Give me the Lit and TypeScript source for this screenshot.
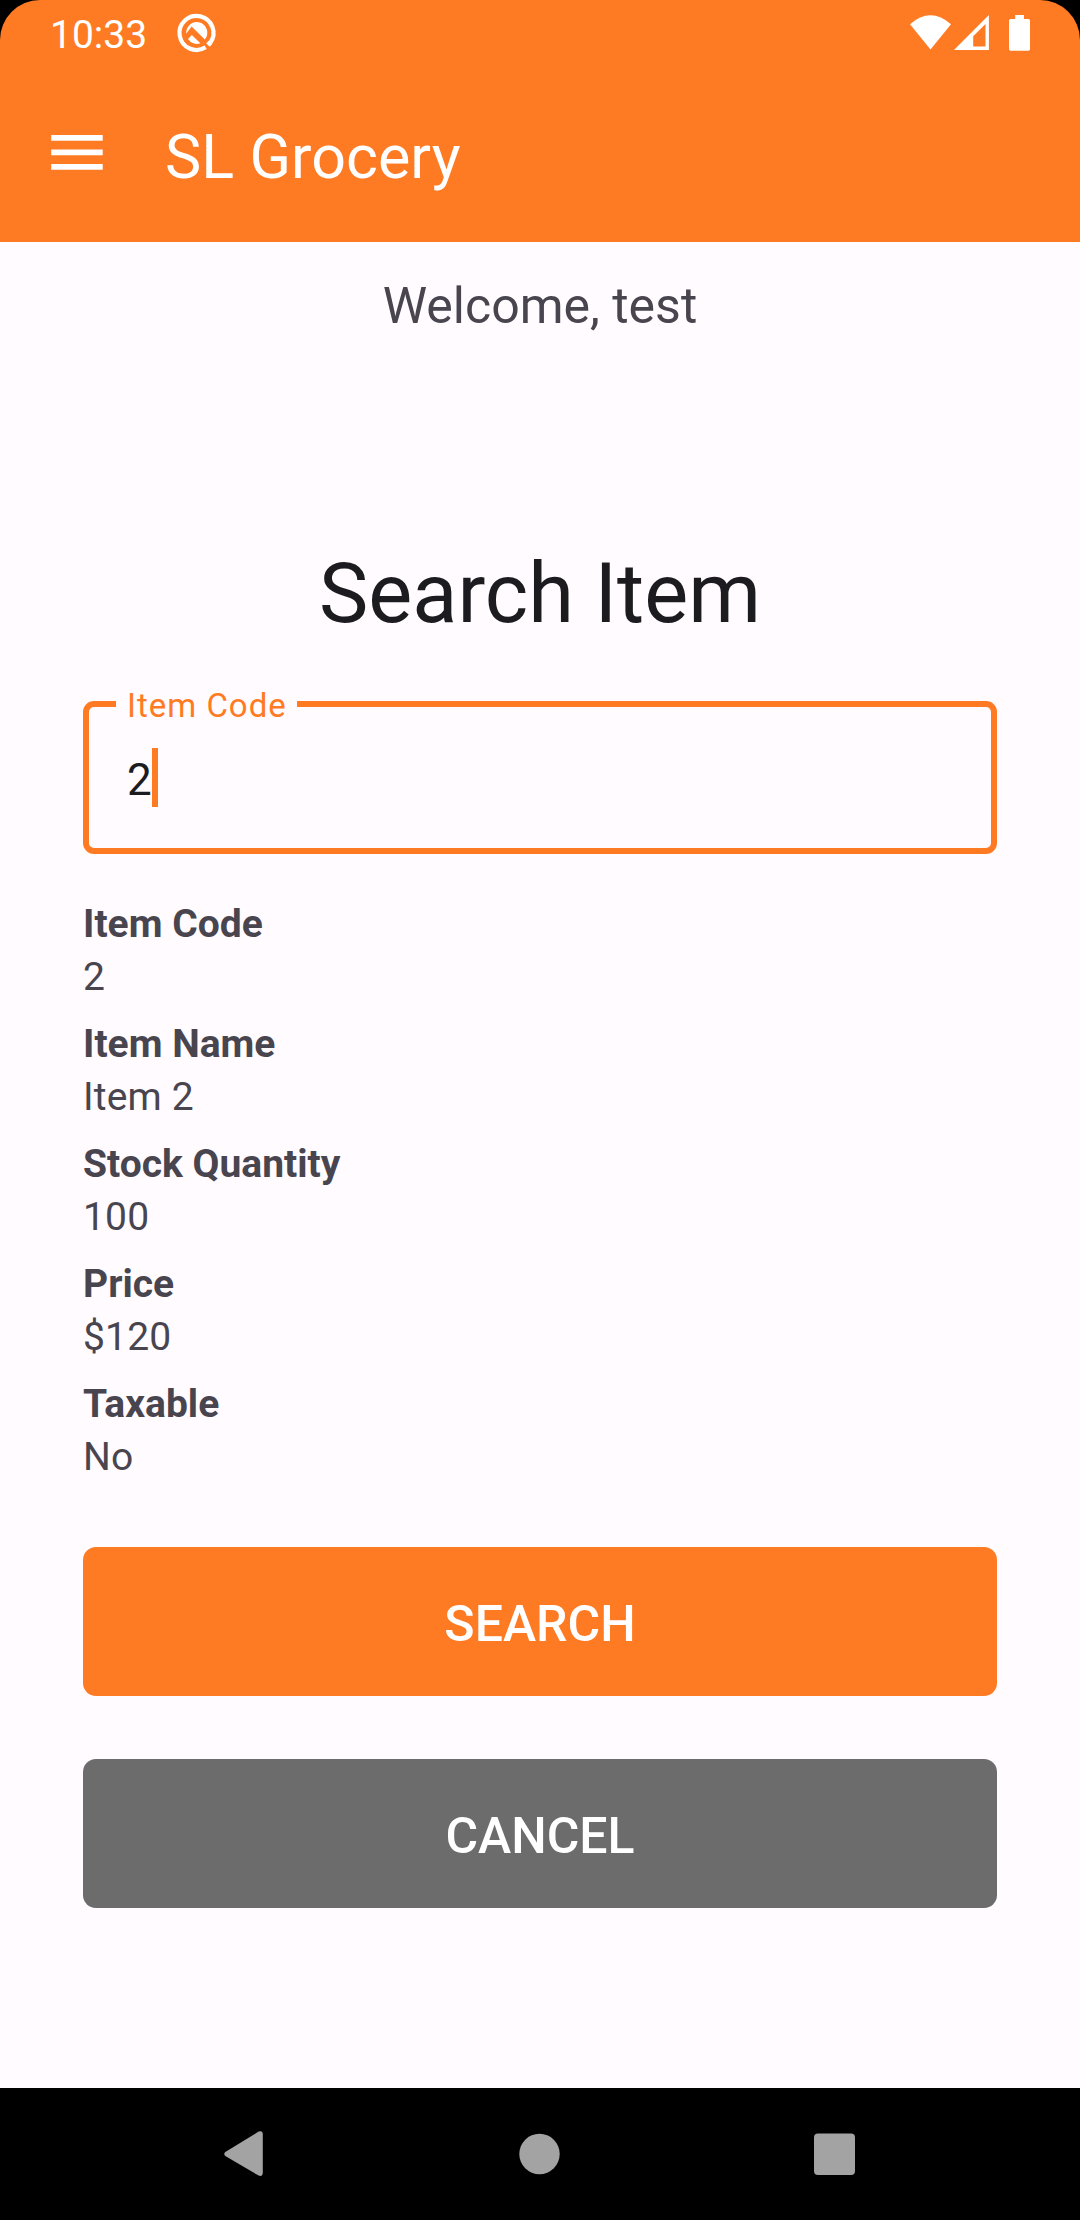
import { LitElement, html, css } from "lit";
import { customElement, property } from "lit/decorators.js";

@customElement("status-bar")
class StatusBar extends LitElement {
  static styles = css`
    :host { display: flex; height: 66px; align-items: flex-start; justify-content: space-between; color: #fff; }
    .left { display: flex; padding-left: 49px; }
    .clock { font-size: 39px; line-height: 46px; padding: 12px 0 0 1px; width: 124px; }
    svg { display: block; fill: #fff; }
  `;
  render() {
    return html`
      <div class="left">
        <div class="clock">10:33</div>
        <svg width="46" height="60" viewBox="174 0 46 60">
          <path fill="none" stroke="#fff" stroke-width="4.2" d="M205.6 47.3A17 17 0 1 1 210.2 43"/>
          <path d="M206.2 43.2l3.5 3.6 2.4-2.6-3.4-3.5z"/>
          <path d="M186.2 33.8A10.6 10.6 0 1 1 204.8 39.6L191.6 26.6z"/>
          <path d="M188 39L191.8 35 200.4 43.3A10.6 10.6 0 0 1 188 39z"/>
          <path fill="#ff7b23" d="M186 34.4L191.4 28.9 205.5 42.6 202 43.6 191.6 33.6 187.3 38.2z"/>
        </svg>
      </div>
      <svg width="220" height="60" viewBox="860 0 220 60">
        <path d="M910 24.2Q930.5 6.4 951 24.2L930.5 49.5z"/>
        <path fill-rule="evenodd" d="M988.9 15v34.9H954zM985.5 24L973.2 36.3V46.6H985.5z"/>
        <path d="M1015.2 15H1024V19H1028.5Q1030 19 1030 20.6V49Q1030 50.8 1028.4 50.8H1010.7Q1009 50.8 1009 49V20.6Q1009 19 1010.6 19H1015.2z"/>
      </svg>
    `;
  }
}

@customElement("app-bar")
class AppBar extends LitElement {
  static styles = css`
    :host { display: flex; height: 176px; color: #fff; }
    .menu { display: block; fill: #fff; margin: 69px 0 0 51px; }
    .title { font-size: 61px; line-height: 70px; padding: 56px 0 0 62px; letter-spacing: 0.06px; }
  `;
  render() {
    return html`
      <svg class="menu" width="52" height="35" viewBox="0 0 52 35">
        <path d="M.2 0h51.5v5.7H.2zM.2 14.5h51.5v5.7H.2zM.2 29h51.5v5.7H.2z"/>
      </svg>
      <div class="title">SL Grocery</div>
    `;
  }
}

@customElement("outlined-field")
class OutlinedField extends LitElement {
  static styles = css`
    :host { display: block; position: relative; box-sizing: border-box; height: 153px; border: 6px solid #ff7b23; border-radius: 11px; }
    .label { position: absolute; left: 27px; top: -21px; width: 181px; box-sizing: border-box; padding-left: 11px;
      background: #fffbff; color: #ff7b23; font-size: 33px; line-height: 40px; letter-spacing: 1px; white-space: nowrap; }
    .value { display: flex; align-items: flex-start; padding: 41px 0 0 38px; color: #1c1b1f; font-size: 44px; line-height: 59px; }
    .caret { width: 6px; height: 59px; background: #ff7b23; }
    .text { padding-top: 3px; width: 25px; }
  `;
  @property() label = "";
  @property() value = "";
  render() {
    return html`
      <span class="label">${this.label}</span>
      <div class="value"><span class="text">${this.value}</span><span class="caret"></span></div>
    `;
  }
}

@customElement("nav-bar")
class NavBar extends LitElement {
  static styles = css`
    :host { display: flex; height: 132px; background: #000; justify-content: space-between; padding: 0 225px 0 224px; align-items: center; }
    svg { display: block; fill: #a3a3a3; }
  `;
  render() {
    return html`
      <svg width="40" height="46" viewBox="0 0 40 46"><path d="M1.3 21L34.6.6Q38.8-.8 38.8 3.4V41.6Q38.8 46 34.6 44.6L1.3 25Q-.8 23 1.3 21z"/></svg>
      <svg width="42" height="42" viewBox="0 0 42 42"><circle cx="21.5" cy="21" r="20.2"/></svg>
      <svg width="41" height="42" viewBox="0 0 41 42"><rect width="41" height="41.6" y=".4" rx="4"/></svg>
    `;
  }
}

@customElement("app-root")
class AppRoot extends LitElement {
  static styles = css`
    :host { display: block; width: 1080px; height: 2220px; background: #000; font-family: Roboto, sans-serif; }
    .screen { display: flex; flex-direction: column; height: 2220px; }
    .header { background: #ff7b23; border-radius: 40px 40px 0 0; height: 242px; }
    .content { flex: 1; background: #fffbff; padding: 35px 83px 0; color: #49454f; }
    .welcome { font-size: 50px; line-height: 58px; text-align: center; }
    .heading { font-size: 83px; line-height: 96px; text-align: center; color: #1c1b1f; margin: 211px 0 59px; font-weight: 400; }
    .details { margin: 44px 0 63px; display: flex; flex-direction: column; gap: 14px; font-size: 39px; line-height: 53px; }
    .name { font-weight: 700; }
    .item { letter-spacing: 0.15px; }
    .button { display: block; width: 100%; height: 149px; border: 0; border-radius: 13px; padding: 4px 0 0; margin-bottom: 63px;
      background: #ff7b23; color: #fff; font: 500 50px/58px Roboto, sans-serif; }
    .secondary { background: #6c6c6c; }
  `;
  private rows = [
    ["Item Code", "2"],
    ["Item Name", "Item 2"],
    ["Stock Quantity", "100"],
    ["Price", "$120"],
    ["Taxable", "No"],
  ];
  render() {
    return html`
      <div class="screen">
        <div class="header"><status-bar></status-bar><app-bar></app-bar></div>
        <div class="content">
          <div class="welcome">Welcome, test</div>
          <h1 class="heading">Search Item</h1>
          <outlined-field label="Item Code" value="2"></outlined-field>
          <div class="details">
            ${this.rows.map(([name, value]) => html`<div><div class="name">${name}</div><div class="item">${value}</div></div>`)}
          </div>
          <button class="button">SEARCH</button>
          <button class="button secondary">CANCEL</button>
        </div>
        <nav-bar></nav-bar>
      </div>
    `;
  }
}
